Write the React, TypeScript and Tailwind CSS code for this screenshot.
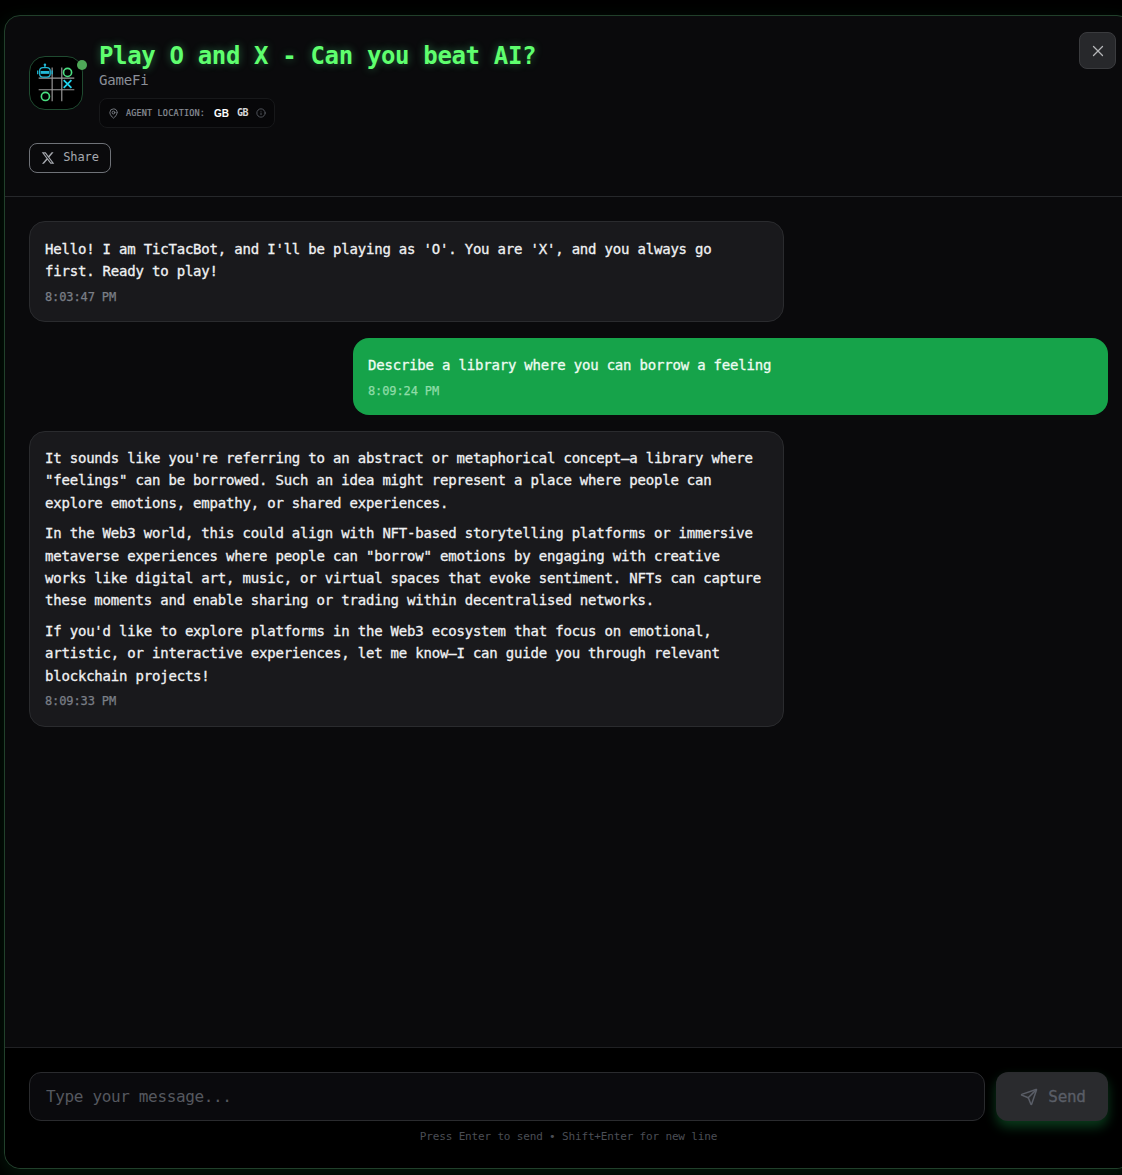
import { Info, MapPin, Send, X } from "lucide-react";
import { FaXTwitter } from "react-icons/fa6";

const mono = "font-['DejaVu_Sans_Mono',monospace]";

const GameIcon = () => (
  <svg viewBox="0 0 54 54" className="size-full" fill="none">
    <g stroke="#9a9a9a" strokeWidth="1.2">
      <path d="M9 22H46" />
      <path d="M9 34H46" />
      <path d="M23 11V46" />
      <path d="M33 11V46" />
    </g>
    <circle cx="39" cy="16" r="4.2" stroke="#4ade80" strokeWidth="1.7" />
    <circle cx="16" cy="41" r="4.2" stroke="#4ade80" strokeWidth="1.7" />
    <path d="M35 24L43 32M43 24L35 32" stroke="#22d3ee" strokeWidth="1.8" />
    <g stroke="#22b8d6" strokeWidth="1.3">
      <rect x="10" y="11" width="11" height="10" rx="3.5" />
      <path d="M8 14V18M23 14V18" />
      <path d="M15.5 8.5V11" />
      <path d="M11 16H20" strokeWidth="3" />
    </g>
    <circle cx="15.5" cy="8" r="1.3" fill="#22b8d6" />
  </svg>
);

const Time = ({ value, user }: { value: string; user?: boolean }) => (
  <p
    className={`mt-[6px] text-[12px] leading-[16.4px] tracking-[-0.12px] [-webkit-text-stroke:0.25px] ${
      user ? "text-[#8fdca8]" : "text-[#7b7f87]"
    }`}
  >
    {value}
  </p>
);

const BotMessage = ({ children, time, long }: { children: React.ReactNode; time: string; long?: boolean }) => (
  <div
    className={`w-[755px] rounded-2xl border border-[#2a2b2e] bg-[#19191c] px-[15px] pb-4 text-[14px] leading-[22.4px] tracking-[-0.2px] text-[#f0f1f3] [-webkit-text-stroke:0.3px] ${
      long ? "pt-[15px]" : "pt-4"
    }`}
  >
    {children}
    <Time value={time} />
  </div>
);

export default function App() {
  return (
    <div className={`h-[1175px] overflow-hidden bg-black pt-[15px] pl-[4px] ${mono}`}>
      <div className="flex h-[1154px] w-[1129px] flex-col rounded-2xl border border-[#21402b] bg-[#0a0a0c] shadow-[0_6px_20px_rgba(34,197,94,0.12)]">
        <header className="relative shrink-0 rounded-t-2xl border-b border-[#26282b] px-6 pt-6 pb-[23px]">
          <div className="flex items-center gap-4">
            <div className="relative mb-[2px] size-[54px] shrink-0 rounded-2xl border border-[#1f4a30] bg-black">
              <GameIcon />
              <span className="absolute top-[3px] -right-[5px] size-[10px] rounded-full bg-[#4fa858]" />
            </div>
            <div>
              <h1 className="text-[24px] leading-8 font-bold tracking-[-0.35px] text-[#5fff6e] [text-shadow:0_0_8px_rgba(74,222,128,0.45)]">
                Play O and X - Can you beat AI?
              </h1>
              <p className="text-[14px] leading-4 tracking-[-0.18px] text-[#8b8f98]">GameFi</p>
              <div className="mt-[10px] flex h-[30px] w-[176px] items-center gap-[7px] rounded-lg border border-[#17181a] bg-[#070709] pl-[8px]">
                <MapPin className="size-[11px] shrink-0 text-[#7b7f87]" />
                <span className="whitespace-nowrap text-[8.5px] tracking-[0.15px] text-[#8b8f98] [-webkit-text-stroke:0.2px]">AGENT LOCATION:</span>
                <span className="ml-[2px] font-['Liberation_Sans',sans-serif] text-[10px] font-bold text-white">GB</span>
                <span className="ml-[1px] -translate-y-px text-[10px] font-bold tracking-[-0.5px] text-[#d6d7da]">GB</span>
                <Info className="ml-[1px] size-[10px] shrink-0 text-[#5d6067]" />
              </div>
            </div>
          </div>
          <button className="mt-[15px] flex h-[30px] w-[82px] items-center justify-center gap-2 rounded-lg border border-[#6f7278] text-[12px] tracking-[-0.12px] text-[#a6a9af]">
            <FaXTwitter className="size-[14px]" />
            <span className="-mt-[2px]">Share</span>
          </button>
          <button className="absolute top-[16px] right-[16px] flex size-[37px] items-center justify-center rounded-lg border border-[#3a3b3e] bg-[#27282b] text-[#b5b6b9]">
            <X className="size-[18px]" strokeWidth={1.75} />
          </button>
        </header>

        <main className="flex flex-1 flex-col gap-4 px-6 pt-6">
          <BotMessage time="8:03:47 PM">
            Hello! I am TicTacBot, and I'll be playing as 'O'. You are 'X', and you always go first. Ready to play!
          </BotMessage>

          <div className="w-[755px] self-end rounded-2xl bg-[#16a34a] px-[15px] py-4 text-[14px] leading-[22.4px] tracking-[-0.2px] text-[#eefcf2] [-webkit-text-stroke:0.3px]">
            Describe a library where you can borrow a feeling
            <Time value="8:09:24 PM" user />
          </div>

          <BotMessage time="8:09:33 PM" long>
            <p className="mb-2">
              It sounds like you're referring to an abstract or metaphorical concept—a library where "feelings" can be borrowed. Such an idea might represent a place where people can explore emotions, empathy, or shared experiences.
            </p>
            <p className="mb-2">
              In the Web3 world, this could align with NFT-based storytelling platforms or immersive metaverse experiences where people can "borrow" emotions by engaging with creative works like digital art, music, or virtual spaces that evoke sentiment. NFTs can capture these moments and enable sharing or trading within decentralised networks.
            </p>
            <p>
              If you'd like to explore platforms in the Web3 ecosystem that focus on emotional, artistic, or interactive experiences, let me know—I can guide you through relevant blockchain projects!
            </p>
          </BotMessage>
        </main>

        <footer className="shrink-0 rounded-b-2xl border-t border-[#202124] bg-black px-6 pt-6 pb-[23px]">
          <div className="flex gap-[11px]">
            <input
              placeholder="Type your message..."
              className="h-[49px] flex-1 rounded-xl border border-[#2a2b2e] bg-[#0a0a0d] px-4 text-[16px] tracking-[-0.35px] outline-none placeholder:text-[#55585f]"
            />
            <button className="flex h-[49px] w-[112px] items-center justify-center gap-[10px] rounded-xl bg-[#2a2b2e] pl-[2px] text-[16px] tracking-[-0.3px] text-[#5a5e67] shadow-[0_6px_12px_rgba(34,197,94,0.3)] [-webkit-text-stroke:0.3px]">
              <Send className="size-[18px]" />
              Send
            </button>
          </div>
          <p className="mt-2 text-center text-[11px] leading-4 tracking-[-0.16px] text-[#4b4e55]">
            Press Enter to send • Shift+Enter for new line
          </p>
        </footer>
      </div>
    </div>
  );
}
